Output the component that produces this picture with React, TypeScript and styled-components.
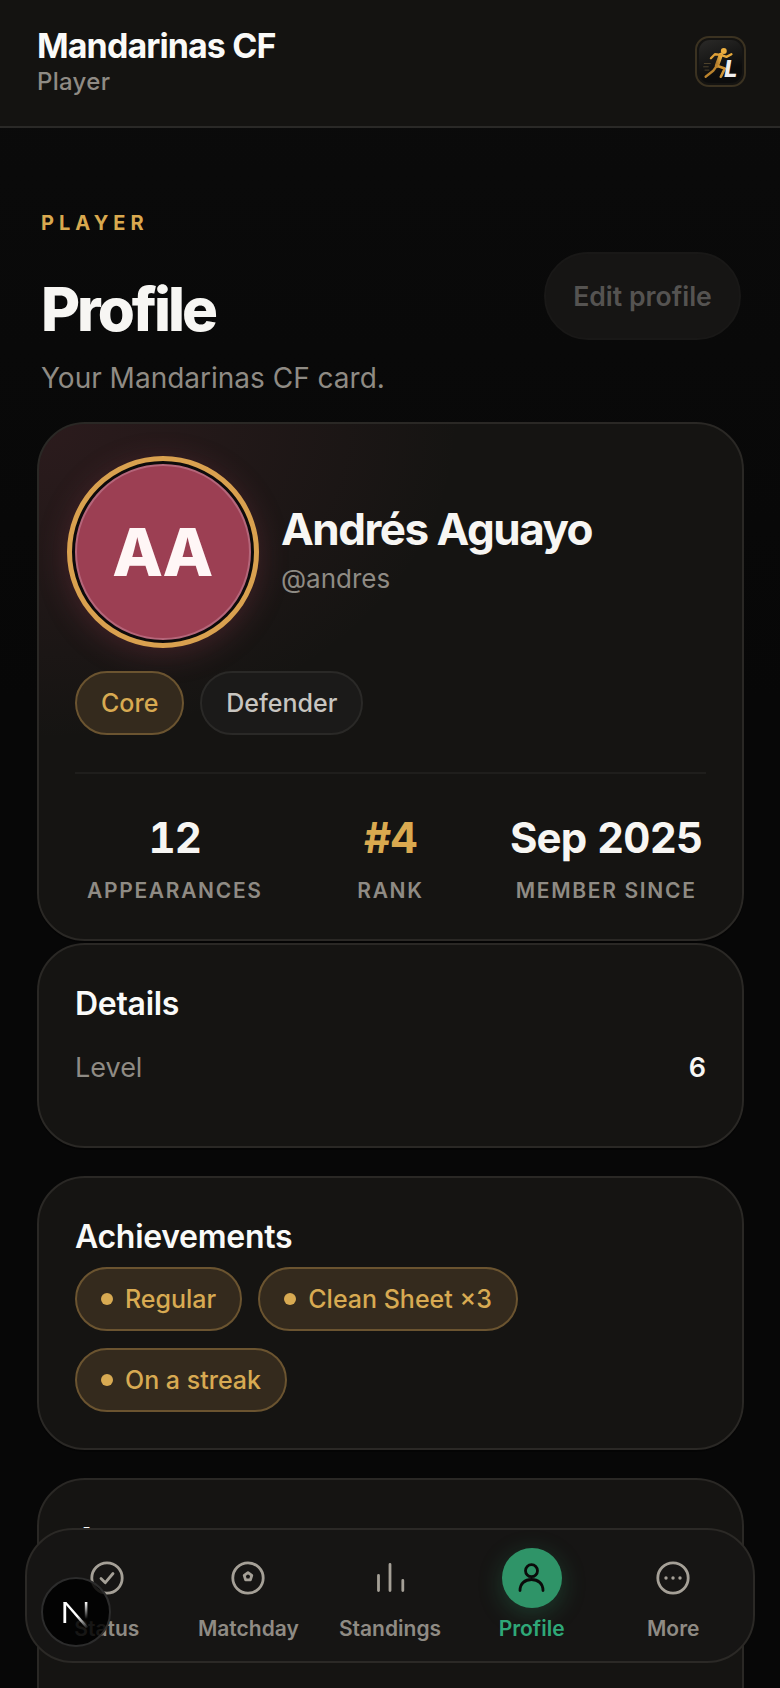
import React from "react";
import styled, { createGlobalStyle } from "styled-components";

const Global = createGlobalStyle`
  html, body { margin: 0; padding: 0; background: #070707; }
  body { font-family: Inter, "Liberation Sans", sans-serif; color: #f5f4f1; }
  * { box-sizing: border-box; }
`;
const Page = styled.div`
  width: 780px; height: 1688px; overflow: hidden; position: relative;
  background: linear-gradient(180deg, #0b0b0b 0, #070707 700px);
`;
const Header = styled.header`
  height: 128px; background: #141311; border-bottom: 2px solid #2a2927;
  display: flex; align-items: flex-start; justify-content: space-between;
  padding: 25px 34px 0 37px;
`;
const Brand = styled.div`display: flex; flex-direction: column;`;
const BrandName = styled.div`font-size: 34px; font-weight: 700; line-height: 42px; letter-spacing: -0.9px; color: #fafaf8;`;
const BrandSub = styled.div`font-size: 24px; font-weight: 500; line-height: 32px; color: #8f8b84; margin-top: -1px; letter-spacing: .3px;`;
const LogoBox = styled.div`
  width: 51px; height: 51px; margin-top: 11px; border-radius: 14px; border: 2px solid #3b3221;
  padding: 2px; background: #141311;
`;
const LogoInner = styled.div`
  width: 100%; height: 100%; border-radius: 11px; background: linear-gradient(160deg,#2b2a28,#0c0c0c 70%);
  display: flex; align-items: center; justify-content: center; overflow: hidden;
`;
const Main = styled.main`padding: 81px 36px 0 37px; display: flex; flex-direction: column;`;
const Hero = styled.section`padding: 0 4px; position: relative; margin-bottom: 24px;`;
const Eyebrow = styled.div`font-size: 20px; font-weight: 700; letter-spacing: 5px; color: #d9a94f; line-height: 28px;`;
const HeroRow = styled.div`display: flex; justify-content: space-between; align-items: flex-start; margin-top: 15px;`;
const H1 = styled.h1`font-size: 60px; font-weight: 800; letter-spacing: -3px; margin: 23px 0 0; line-height: 68px; color: #f7f6f3;`;
const EditBtn = styled.button`
  width: 197px; height: 88px; border-radius: 44px; border: 2px solid #191817; background: #161514;
  font-family: inherit; font-size: 26.6px; font-weight: 600; color: #555351; padding: 0; margin-right: -1px;
`;
const Sub = styled.p`font-size: 28px; line-height: 40px; margin: 15px 0 0; color: #8f8b84;`;
const Card = styled.section<{ $glow?: boolean; $gap?: number }>`
  border: 2px solid #2a2825; border-radius: 48px; background: #151412;
  padding: 36px; margin-bottom: ${(p) => p.$gap ?? 28}px;
  box-shadow: 0 2px 0 rgba(0,0,0,.3);
  ${(p) => p.$glow && `padding-top: 32px; padding-bottom: 34px; background: radial-gradient(ellipse 560px 420px at 0% 0%, rgba(156,63,83,.17), transparent 75%), #151412;`}
`;
const ProfileRow = styled.div`display: flex; align-items: center; gap: 22px; margin-left: -8px;`;
const AvatarRing = styled.div`
  width: 192px; height: 192px; border-radius: 50%; border: 5px solid #d9a14f; padding: 3px; background: #0d0b0b; flex: none;
  box-shadow: 0 6px 30px rgba(156,63,83,.3);
`;
const Avatar = styled.div`
  width: 100%; height: 100%; border-radius: 50%; background: #9c3f53; border: 2px solid #b5667a;
  display: flex; align-items: center; justify-content: center;
  font-size: 66px; font-weight: 800; color: #fff6f6; letter-spacing: -1.5px; padding-right: 2px;
`;
const NameBlock = styled.div`display: flex; flex-direction: column; margin-top: -5px;`;
const Name = styled.div`font-size: 44px; font-weight: 700; letter-spacing: -1.5px; line-height: 54px; color: #f7f6f3;`;
const Handle = styled.div`font-size: 26px; line-height: 36px; color: #8f8b84; margin-top: 5px;`;
const ChipRow = styled.div<{ $top: number }>`display: flex; flex-wrap: wrap; gap: 17px 16px; margin-top: ${(p) => p.$top}px;`;
const Chip = styled.span<{ $gold?: boolean }>`
  display: inline-flex; align-items: center; gap: 12px; height: 64px; padding: 0 24px; border-radius: 32px;
  font-size: 25px; font-weight: 500;
  border: 2px solid ${(p) => (p.$gold ? "#6b5430" : "#2a2927")};
  background: ${(p) => (p.$gold ? "#342a1d" : "#1b1a19")};
  color: ${(p) => (p.$gold ? "#d8aa52" : "#c8c5c0")};
`;
const Dot = styled.i`width: 12px; height: 12px; border-radius: 50%; background: #d8aa52; flex: none;`;
const Divider = styled.hr`border: 0; height: 2px; background: #1f1e1c; margin: 37px 0 37px;`;
const Stats = styled.div`display: grid; grid-template-columns: repeat(3, 1fr); gap: 16px;`;
const Stat = styled.div`display: flex; flex-direction: column; align-items: center;`;
const StatValue = styled.div<{ $gold?: boolean }>`font-size: 42px; font-weight: 700; line-height: 54px; letter-spacing: -.8px; font-variant-numeric: tabular-nums; color: ${(p) => (p.$gold ? "#d9a94f" : "#f7f6f3")};`;
const StatLabel = styled.div`font-size: 21px; font-weight: 600; letter-spacing: 1.68px; line-height: 28px; color: #8f8b84; margin-top: 12px; white-space: nowrap;`;
const CardTitle = styled.h2<{ $top?: number }>`font-size: 32px; font-weight: 600; margin: ${(p) => p.$top ?? 3}px 0 0; line-height: 40px; color: #fafaf8; letter-spacing: -.3px;`;
const DetailRow = styled.div`display: flex; justify-content: space-between; margin-top: 24px; padding-bottom: 22px; font-size: 27px; line-height: 40px; color: #8f8b84;`;
const DetailValue = styled.span`color: #f7f6f3; font-weight: 600;`;
const PlaceholderBody = styled.div`height: 240px;`;
const Nav = styled.nav`
  position: absolute; left: 25px; top: 1528px; width: 730px; height: 135px; border-radius: 48px;
  border: 2px solid #2b2926; background: #161514; padding: 0 9px;
  display: grid; grid-template-columns: repeat(5, 1fr);
`;
const NavItem = styled.div<{ $active?: boolean }>`
  display: flex; flex-direction: column; align-items: center; position: relative;
  color: ${(p) => (p.$active ? "#2fa878" : "#8f8b84")};
  padding-top: 18px;
`;
const IconWrap = styled.div<{ $active?: boolean }>`
  width: 60px; height: 60px; border-radius: 50%; display: flex; align-items: center; justify-content: center;
  color: ${(p) => (p.$active ? "#0b0b0a" : "#a5a097")};
  background: ${(p) => (p.$active ? "#2f9468" : "transparent")};
  box-shadow: ${(p) => (p.$active ? "0 6px 24px rgba(47,148,104,.3)" : "none")};
`;
const NavLabel = styled.div`font-size: 21px; font-weight: 600; line-height: 30px; margin-top: 6px;`;
const NextBadge = styled.div`
  position: absolute; left: 41px; top: 1577px; width: 70px; height: 70px; border-radius: 50%;
  background: rgba(0,0,0,.84); border: 2px solid #2c2c2c; display: flex; align-items: center; justify-content: center;
`;

const I = ({ children }: { children: React.ReactNode }) => (
  <svg width="36" height="36" viewBox="0 0 36 36" fill="none" stroke="currentColor" strokeWidth="2.8" strokeLinecap="round" strokeLinejoin="round">
    {children}
  </svg>
);
const Logo = () => (
  <svg width="42" height="42" viewBox="55 60 127 127" fill="none" strokeLinecap="round" strokeLinejoin="round">
    <defs>
      <linearGradient id="gold" x1="0" y1="1" x2="1" y2="0"><stop offset="0" stopColor="#a8742a" /><stop offset="1" stopColor="#f0b544" /></linearGradient>
    </defs>
    <path d="M68 128h18M66 138h14M70 148h12" stroke="#6b5a38" strokeWidth="2" />
    <circle cx="127" cy="90" r="9" fill="#eeb040" />
    <path d="M118 102L106 135" stroke="url(#gold)" strokeWidth="13" />
    <path d="M118 102L135 108L150 100" stroke="#e8aa3c" strokeWidth="7" />
    <path d="M118 102L100 100L88 112" stroke="#dfa038" strokeWidth="7" />
    <path d="M106 135L130 143L118 168" stroke="#cf9433" strokeWidth="8" />
    <path d="M106 135L95 150L72 168" stroke="#b9822d" strokeWidth="7" />
    <text x="128" y="168" fontFamily="Inter, sans-serif" fontSize="70" fontWeight="800" fontStyle="italic" fill="#efefef" stroke="none">L</text>
  </svg>
);
const NextN = () => (
  <svg width="36" height="36" viewBox="0 0 36 36">
    <defs>
      <linearGradient id="nx" x1="0" y1="0" x2="1" y2="1"><stop offset=".55" stopColor="#fff" /><stop offset="1" stopColor="#fff" stopOpacity="0" /></linearGradient>
      <linearGradient id="ny" x1="0" y1="0" x2="0" y2="1"><stop offset="0" stopColor="#fff" /><stop offset="1" stopColor="#fff" stopOpacity="0" /></linearGradient>
    </defs>
    <path d="M5.4 8h2.8v21H5.4Z" fill="#fff" />
    <path d="M5.4 8h3L30.4 33l-2.4 1.2Z" fill="url(#nx)" />
    <path d="M26.8 8h2.6v17h-2.6Z" fill="url(#ny)" />
  </svg>
);

const Items = [
  { label: "Status", icon: <I><circle cx="18" cy="18" r="15.2" /><path d="M12 18.5l4.3 4.2 7.7-9.2" /></I> },
  { label: "Matchday", icon: <I><circle cx="18" cy="18" r="15.2" /><path d="M18 12.6l3.8 2.8-1.4 4.4h-4.8l-1.4-4.4Z" /></I> },
  { label: "Standings", icon: <I><path d="M6.5 15.4V30.6M18 4.4V30.6M30.8 20.4V30.6" /></I> },
  { label: "Profile", active: true, icon: <I><circle cx="17.5" cy="10.7" r="6" /><path d="M6 30.5C6 23.5 11 19.5 17.5 19.5S29 23.5 29 30.5" /></I> },
  { label: "More", icon: <I><circle cx="18" cy="18" r="15.2" /><g fill="currentColor" stroke="none"><circle cx="11" cy="18" r="1.7" /><circle cx="18" cy="18" r="1.7" /><circle cx="25" cy="18" r="1.7" /></g></I> },
];

export default function App() {
  return (
    <Page>
      <Global />
      <Header>
        <Brand>
          <BrandName>Mandarinas CF</BrandName>
          <BrandSub>Player</BrandSub>
        </Brand>
        <LogoBox><LogoInner><Logo /></LogoInner></LogoBox>
      </Header>
      <Main>
        <Hero>
          <Eyebrow>PLAYER</Eyebrow>
          <HeroRow>
            <div>
              <H1>Profile</H1>
              <Sub>Your Mandarinas CF card.</Sub>
            </div>
            <EditBtn>Edit profile</EditBtn>
          </HeroRow>
        </Hero>
        <Card $glow $gap={2}>
          <ProfileRow>
            <AvatarRing><Avatar>AA</Avatar></AvatarRing>
            <NameBlock>
              <Name>Andrés Aguayo</Name>
              <Handle>@andres</Handle>
            </NameBlock>
          </ProfileRow>
          <ChipRow $top={23}>
            <Chip $gold>Core</Chip>
            <Chip>Defender</Chip>
          </ChipRow>
          <Divider />
          <Stats>
            <Stat><StatValue>12</StatValue><StatLabel>APPEARANCES</StatLabel></Stat>
            <Stat><StatValue $gold>#4</StatValue><StatLabel>RANK</StatLabel></Stat>
            <Stat><StatValue>Sep 2025</StatValue><StatLabel>MEMBER SINCE</StatLabel></Stat>
          </Stats>
        </Card>
        <Card>
          <CardTitle>Details</CardTitle>
          <DetailRow><span>Level</span><DetailValue>6</DetailValue></DetailRow>
        </Card>
        <Card>
          <CardTitle>Achievements</CardTitle>
          <ChipRow $top={10}>
            <Chip $gold><Dot />Regular</Chip>
            <Chip $gold><Dot />Clean Sheet ×3</Chip>
            <Chip $gold><Dot />On a streak</Chip>
          </ChipRow>
        </Card>
        <Card>
          <CardTitle $top={4}>Account</CardTitle>
          <PlaceholderBody />
        </Card>
      </Main>
      <Nav>
        {Items.map((it) => (
          <NavItem key={it.label} $active={it.active}>
            <IconWrap $active={it.active}>{it.icon}</IconWrap>
            <NavLabel>{it.label}</NavLabel>
          </NavItem>
        ))}
      </Nav>
      <NextBadge><NextN /></NextBadge>
    </Page>
  );
}
